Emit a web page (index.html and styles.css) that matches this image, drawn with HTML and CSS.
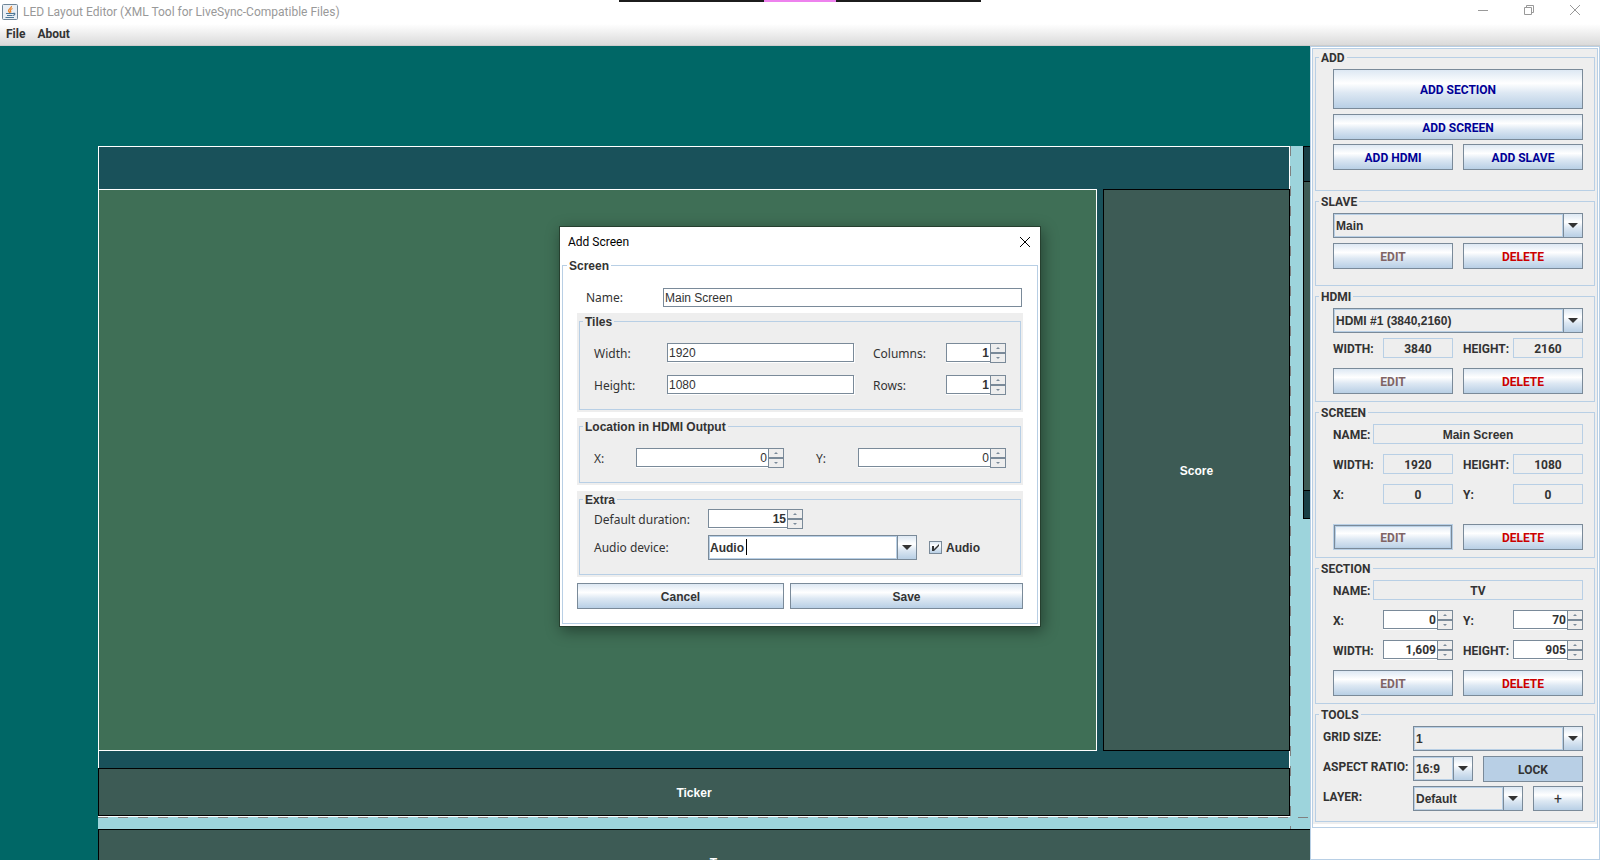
FILE: index.html
```html
<!DOCTYPE html>
<html lang="en">
<head>
<meta charset="utf-8">
<title>LED Layout Editor</title>
<link rel="stylesheet" href="styles.css">
</head>
<body>
<header class="titlebar">
  <svg class="app-icon" viewBox="0 0 16 16" aria-hidden="true">
    <rect x=".5" y=".5" width="15" height="15" rx="1" fill="#e9eff5" stroke="#6f8698"/>
    <path d="M9.500 2C10 4 6 5 6.500 7L8 9M10.500 4.500C8 5.500 8 6.500 9 8.500" fill="none" stroke="#e8862e" stroke-width="1.300"/>
    <path d="M4 9.500h7M5 11.500h5.500M3.500 13.500h8.500M11 9.500c2.500-.8 2.500 1.500 0 2" fill="none" stroke="#4d7898" stroke-width="1.200"/>
  </svg>
  <h1 class="app-title">LED Layout Editor (XML Tool for LiveSync-Compatible Files)</h1>
  <div class="window-buttons">
    <button class="window-button" aria-label="Minimize"><svg viewBox="0 0 10 10"><path d="M0 5.500h10"/></svg></button>
    <button class="window-button" aria-label="Restore"><svg viewBox="0 0 10 10"><path d="M.5 2.500h7v7h-7zM2.500 2.500v-2h7v7h-2"/></svg></button>
    <button class="window-button" aria-label="Close"><svg viewBox="0 0 10 10"><path d="M0 0l10 10M10 0L0 10"/></svg></button>
  </div>
  <div class="share-strip"><span class="share-strip-mark"></span></div>
</header>
<nav class="menubar">
  <button class="menu-item">File</button>
  <button class="menu-item">About</button>
</nav>
<main class="workspace">
  <div class="canvas">
    <div class="output"></div>
    <div class="screen screen-main"></div>
    <div class="block block-tv"></div>
    <div class="block block-score">Score</div>
    <div class="block block-ticker">Ticker</div>
    <div class="guide-h"></div>
    <div class="guide-v"></div>
    <div class="block block-lower">T</div>
    <div class="side-screen">
      <div class="block side-a"></div>
      <div class="block side-b"></div>
      <div class="block side-c"></div>
    </div>
  </div>
  <aside class="sidebar">
    <div class="sidebar-inner">
      <div class="groups">
        <fieldset class="group">
          <legend>ADD</legend>
          <div class="group-body body-add">
            <button class="btn btn-add btn-tall">ADD SECTION</button>
            <div class="stack">
              <button class="btn btn-add">ADD SCREEN</button>
              <div class="pair">
                <button class="btn btn-add">ADD HDMI</button>
                <button class="btn btn-add">ADD SLAVE</button>
              </div>
            </div>
          </div>
        </fieldset>
        <fieldset class="group">
          <legend>SLAVE</legend>
          <div class="group-body body-slave">
            <div class="combo"><select aria-label="Slave"><option>Main</option></select><span class="arrow"></span></div>
            <div class="pair">
              <button class="btn btn-edit">EDIT</button>
              <button class="btn btn-delete">DELETE</button>
            </div>
          </div>
        </fieldset>
        <fieldset class="group">
          <legend>HDMI</legend>
          <div class="group-body">
            <div class="combo"><select aria-label="HDMI"><option>HDMI #1 (3840,2160)</option></select><span class="arrow"></span></div>
            <div class="pair">
              <div class="prop"><label for="hw">WIDTH:</label><input id="hw" class="readout" value="3840" readonly></div>
              <div class="prop"><label for="hh">HEIGHT:</label><input id="hh" class="readout" value="2160" readonly></div>
            </div>
            <div class="pair spaced-row">
              <button class="btn btn-edit">EDIT</button>
              <button class="btn btn-delete">DELETE</button>
            </div>
          </div>
        </fieldset>
        <fieldset class="group">
          <legend>SCREEN</legend>
          <div class="group-body rows">
            <div class="prop prop-name"><label for="sn">NAME:</label><input id="sn" class="readout mixed" value="Main Screen" readonly></div>
            <div class="pair">
              <div class="prop"><label for="sw">WIDTH:</label><input id="sw" class="readout" value="1920" readonly></div>
              <div class="prop"><label for="sh">HEIGHT:</label><input id="sh" class="readout" value="1080" readonly></div>
            </div>
            <div class="pair">
              <div class="prop"><label for="sx">X:</label><input id="sx" class="readout" value="0" readonly></div>
              <div class="prop"><label for="sy">Y:</label><input id="sy" class="readout" value="0" readonly></div>
            </div>
            <div class="pair far-row">
              <button class="btn btn-edit btn-focus">EDIT</button>
              <button class="btn btn-delete">DELETE</button>
            </div>
          </div>
        </fieldset>
        <fieldset class="group">
          <legend>SECTION</legend>
          <div class="group-body rows">
            <div class="prop prop-name"><label for="cn">NAME:</label><input id="cn" class="readout" value="TV" readonly></div>
            <div class="pair">
              <div class="prop"><label for="cx">X:</label><div class="spinner"><input id="cx" value="0"><button class="up" aria-label="Increase"></button><button class="down" aria-label="Decrease"></button></div></div>
              <div class="prop"><label for="cy">Y:</label><div class="spinner"><input id="cy" value="70"><button class="up" aria-label="Increase"></button><button class="down" aria-label="Decrease"></button></div></div>
            </div>
            <div class="pair">
              <div class="prop"><label for="cw">WIDTH:</label><div class="spinner"><input id="cw" value="1,609"><button class="up" aria-label="Increase"></button><button class="down" aria-label="Decrease"></button></div></div>
              <div class="prop"><label for="ch">HEIGHT:</label><div class="spinner"><input id="ch" value="905"><button class="up" aria-label="Increase"></button><button class="down" aria-label="Decrease"></button></div></div>
            </div>
            <div class="pair">
              <button class="btn btn-edit">EDIT</button>
              <button class="btn btn-delete">DELETE</button>
            </div>
          </div>
        </fieldset>
        <fieldset class="group">
          <legend>TOOLS</legend>
          <div class="group-body body-tools">
            <div class="tool"><label for="grid">GRID SIZE:</label><div class="combo"><select id="grid"><option>1</option></select><span class="arrow"></span></div></div>
            <div class="tool tool-ratio"><label for="ratio">ASPECT RATIO:</label><div class="combo"><select id="ratio"><option>16:9</option></select><span class="arrow"></span></div><button class="btn btn-pressed" aria-pressed="true">LOCK</button></div>
            <div class="tool tool-layer"><label for="layer">LAYER:</label><div class="combo"><select id="layer"><option>Default</option></select><span class="arrow"></span></div><button class="btn btn-plus">+</button></div>
          </div>
        </fieldset>
      </div>
    </div>
  </aside>
</main>

<div class="dialog" role="dialog" aria-labelledby="dialog-title">
  <div class="dialog-head">
    <h2 id="dialog-title" class="dialog-title">Add Screen</h2>
    <button class="dialog-close" aria-label="Close"><svg viewBox="0 0 10 10"><path d="M0 0l10 10M10 0L0 10"/></svg></button>
  </div>
  <fieldset class="group dialog-group">
    <legend>Screen</legend>
    <form class="dialog-body">
      <div class="name-row"><label for="name">Name:</label><input id="name" class="field" value="Main Screen"></div>
      <div class="panel">
        <fieldset class="group">
          <legend>Tiles</legend>
          <div class="tiles">
            <label for="tw">Width:</label><input id="tw" class="field" value="1920">
            <label for="tc" class="second-label">Columns:</label><div class="spinner spinner-bold"><input id="tc" value="1"><button type="button" class="up" aria-label="Increase"></button><button type="button" class="down" aria-label="Decrease"></button></div>
            <label for="th">Height:</label><input id="th" class="field" value="1080">
            <label for="tr" class="second-label">Rows:</label><div class="spinner spinner-bold"><input id="tr" value="1"><button type="button" class="up" aria-label="Increase"></button><button type="button" class="down" aria-label="Decrease"></button></div>
          </div>
        </fieldset>
      </div>
      <div class="panel">
        <fieldset class="group">
          <legend>Location in HDMI Output</legend>
          <div class="location">
            <div class="axis"><label for="lx">X:</label><div class="spinner spinner-plain"><input id="lx" value="0"><button type="button" class="up" aria-label="Increase"></button><button type="button" class="down" aria-label="Decrease"></button></div></div>
            <div class="axis"><label for="ly">Y:</label><div class="spinner spinner-plain"><input id="ly" value="0"><button type="button" class="up" aria-label="Increase"></button><button type="button" class="down" aria-label="Decrease"></button></div></div>
          </div>
        </fieldset>
      </div>
      <div class="panel">
        <fieldset class="group">
          <legend>Extra</legend>
          <div class="extra">
            <div class="extra-row"><label for="dur">Default duration:</label><div class="spinner spinner-bold spinner-mid"><input id="dur" value="15"><button type="button" class="up" aria-label="Increase"></button><button type="button" class="down" aria-label="Decrease"></button></div></div>
            <div class="extra-row"><label for="dev">Audio device:</label><div class="combo combo-edit"><input id="dev" value="Audio"><span class="caret"></span><button type="button" class="arrow" aria-label="Show devices"></button></div>
              <div class="check"><span class="check-frame"><input type="checkbox" id="audio" checked><svg class="check-mark" viewBox="0 0 13 13" aria-hidden="true"><path d="M3 5h2v3l5-5v2L5 10H3z"/></svg></span><label for="audio">Audio</label></div>
            </div>
          </div>
        </fieldset>
      </div>
      <div class="dialog-actions">
        <button type="button" class="btn mixed">Cancel</button>
        <button type="button" class="btn mixed">Save</button>
      </div>
    </form>
  </fieldset>
</div>
</body>
</html>
```
FILE: styles.css
```css
:root {
  --line: #b8cfe5;
  --edge: #7a8a99;
  --panel: #eeeeee;
  --ink: #333333;
  --grad: linear-gradient(#dde8f3 0%, #ffffff 35%, #dde8f3 60%, #b8cfe5 100%);
  --caps: Roboto, sans-serif;
  --text: "Liberation Sans", Arial, sans-serif;
  --humanist: "Noto Sans", sans-serif;
}

* { box-sizing: border-box; }

body {
  margin: 0;
  min-height: 100vh;
  display: flex;
  flex-direction: column;
  position: relative;
  overflow: hidden;
  background: #fff;
  color: var(--ink);
  font: bold 12px/15px var(--text);
}

button, input, select {
  font: inherit;
  color: inherit;
  margin: 0;
  padding: 0;
  border: 0;
  border-radius: 0;
  outline: 0;
  min-width: 0;
  background: none;
}

/* Title bar and menu */
.titlebar {
  height: 24px;
  display: flex;
  align-items: center;
  padding: 0 2px;
  position: relative;
}
.app-icon { width: 16px; height: 16px; }
.app-title {
  margin: 0 0 0 5px;
  font: normal 12px/16px Roboto, sans-serif;
  color: #999;
}
.window-buttons { margin-left: auto; display: flex; align-self: flex-start; }
.window-button { width: 46px; height: 20px; display: grid; place-items: center; }
.window-button svg, .dialog-close svg { width: 10px; height: 10px; fill: none; stroke: #999; overflow: visible; }
.share-strip {
  position: absolute;
  top: 0;
  left: 619px;
  width: 362px;
  height: 2px;
  background: #1c1c1c;
}
.share-strip-mark { display: block; width: 72px; height: 2px; margin: 0 auto; background: #ee82ee; }
.menubar {
  height: 22px;
  display: flex;
  gap: 12px;
  padding: 0 6px 1px;
  background: linear-gradient(#ffffff, #dadada);
  border-bottom: 1px solid #cccccc;
  font-family: var(--caps);
}

/* Layout canvas */
.workspace { flex: 1; display: flex; }
.canvas {
  flex: 1;
  position: relative;
  overflow: hidden;
  background: #006766;
  color: #fff;
}
.canvas > div, .side-screen > div { position: absolute; }
.output { left: 98px; top: 100px; right: 0; bottom: 0; background: #9dd4dc; }
.screen-main { left: 98px; top: 100px; width: 1192px; height: 671px; background: #19515a; border: 1px solid #fff; }
.block {
  display: grid;
  place-items: center;
  padding-top: 2px;
  background: #3d5b55;
  border: 1px solid #000;
}
.block-tv { left: 98px; top: 143px; width: 999px; height: 562px; background: #3f6f56; border-color: #fff; }
.block-score { left: 1103px; top: 143px; width: 187px; height: 562px; }
.block-ticker { left: 98px; top: 722px; width: 1192px; height: 48px; }
.block-lower { left: 98px; top: 783px; width: 1231px; height: 66px; }
.guide-h {
  left: 98px;
  right: 0;
  top: 771px;
  height: 1px;
  background: repeating-linear-gradient(90deg, #808080 0 10px, transparent 10px 20px);
}
.guide-v {
  left: 1290px;
  top: 100px;
  bottom: 0;
  width: 1px;
  background: repeating-linear-gradient(#808080 0 10px, transparent 10px 20px);
}
.side-screen { left: 1303px; top: 100px; width: 40px; height: 373px; }
.side-a { inset: 0 0 auto; height: 36px; background: #193e45; }
.side-b { inset: 35px 0 auto; height: 310px; }
.side-c { inset: 344px 0 auto; height: 29px; background: #193e45; }

/* Titled groups */
.group {
  margin: 0;
  padding: 0;
  min-width: 0;
  border: 1px solid var(--line);
}
.group legend { margin-left: 3px; padding: 0 2px; height: 15px; line-height: 17px; }

/* Sidebar */
.sidebar {
  width: 290px;
  padding: 1px;
  border: 1px solid var(--line);
  font-family: var(--caps);
}
.sidebar-inner { padding-bottom: 3px; border: 1px solid var(--line); }
.groups {
  display: grid;
  gap: 3px;
  padding: 1px 2px 2px;
  background: var(--panel);
}
.group-body { display: grid; gap: 5px; padding: 4px 11px 7px 17px; }
.body-add { padding-bottom: 20px; }
.body-slave { padding-bottom: 16px; }
.rows { gap: 10px; }
.stack { display: grid; gap: 4px; }
.pair { display: grid; grid-template-columns: 1fr 1fr; gap: 10px; }
.spaced-row { margin-top: 5px; }
.far-row { margin-top: 10px; }
.prop { display: grid; grid-template-columns: 50px 1fr; align-items: center; }
.prop label { line-height: 16px; padding-top: 1px; }
.prop-name { grid-template-columns: 40px 1fr; }
.readout {
  width: 100%;
  height: 20px;
  padding-top: 1px;
  border: 1px solid var(--line);
  text-align: center;
}
.mixed, .combo { font-family: var(--text); }
.body-tools { padding: 4px 11px 10px 7px; }
.tool { display: grid; grid-template-columns: 90px 1fr; height: 25px; }
.tool label { padding-top: 4px; white-space: nowrap; }
.tool-ratio { grid-template-columns: 90px 60px 1fr; }
.tool-ratio .btn { margin-left: 10px; }
.tool-layer { grid-template-columns: 90px 110px 1fr; }
.tool-layer .btn { margin-left: 10px; height: 25px; }

/* Controls */
.btn {
  height: 26px;
  padding-top: 2px;
  border: 1px solid var(--edge);
  background: var(--grad);
  text-align: center;
}
.btn-tall { height: 40px; }
.btn-add { color: #000096; }
.btn-edit { color: #806464; }
.btn-delete { color: #cc0000; }
.btn-pressed { background: var(--line); }
.btn-plus { font-weight: normal; font-size: 14px; }
.btn-focus { border-color: var(--line); box-shadow: inset 0 0 0 1px var(--edge), inset 0 0 0 2px var(--line); }

.combo {
  display: grid;
  grid-template-columns: 1fr 19px;
  height: 25px;
  border: 1px solid var(--edge);
  position: relative;
}
.combo select, .combo input {
  appearance: none;
  width: 100%;
  height: 23px;
  padding: 1px 0 0 1px;
  border: 1px solid var(--line);
}
.arrow {
  display: grid;
  place-items: center;
  border-left: 1px solid var(--edge);
  background: var(--grad);
}
.arrow::before {
  content: "";
  border: 5px solid transparent;
  border-top-color: var(--ink);
  border-bottom: 0;
}
.combo-edit { width: 209px; }
.combo-edit input { padding-left: 0; background: #fff; }
.caret { position: absolute; left: 37px; top: 3px; width: 1px; height: 16px; background: #000; }

.field {
  width: 100%;
  height: 19px;
  padding: 1px 0 0 1px;
  border: 1px solid var(--edge);
  background: #fff;
  box-shadow: 1px 1px 0 #fff;
  font: normal 12px/15px var(--text);
}

.spinner {
  display: grid;
  grid-template: 10px 10px / 1fr 16px;
  height: 20px;
}
.spinner input {
  grid-row: 1 / 3;
  width: 100%;
  height: 19px;
  padding: 1px 1px 0 0;
  border: 1px solid var(--edge);
  border-right: 0;
  background: #fff;
  box-shadow: 0 1px 0 #fff;
  text-align: right;
}
.spinner button {
  display: grid;
  place-items: center;
  border: 1px solid var(--edge);
  background: var(--panel);
}
.spinner button::before { content: ""; border: 2px solid transparent; }
.spinner .up::before { border-bottom-color: var(--edge); border-top: 0; }
.spinner .down::before { border-top-color: var(--edge); border-bottom: 0; }
.spinner-plain input { font: normal 12px/15px var(--text); }
.spinner-bold input { font: bold 12px/15px var(--text); }
.spinner-mid { width: 95px; }

/* Add Screen dialog */
.dialog {
  position: absolute;
  left: 559px;
  top: 226px;
  width: 482px;
  padding: 0 2px 2px;
  border: 1px solid #26402f;
  background: #fff;
  box-shadow: 2px 4px 14px rgba(0, 0, 0, .4);
}
.dialog-head {
  height: 31px;
  display: flex;
  align-items: center;
  justify-content: space-between;
  padding: 0 8px 2px 6px;
}
.dialog-title { margin: 0; font: normal 12px/16px Roboto, sans-serif; color: #000; }
.dialog-close { width: 10px; height: 10px; }
.dialog-close svg { display: block; stroke: #000; }
.dialog-group > legend { margin-left: 4px; }
.dialog-body { display: grid; gap: 6px; padding: 14px; }
.dialog-body label { font: normal 12px/15px var(--humanist); }
.name-row { display: grid; grid-template-columns: 77px 1fr; align-items: center; height: 20px; padding: 0 1px 0 9px; }
.panel { padding: 1px 2px 2px; background: var(--panel); }
.tiles {
  display: grid;
  grid-template-columns: 73px 1fr 92px 60px;
  row-gap: 12px;
  align-items: center;
  padding: 14px 14px 14px 14px;
}
.tiles .field { align-self: start; }
.second-label { padding-left: 19px; }
.location { display: grid; grid-template-columns: 1fr 1fr; gap: 32px; padding: 14px; }
.axis { display: grid; grid-template-columns: 42px 1fr; align-items: center; }
.extra { display: grid; gap: 6px; padding: 2px 14px 14px; }
.extra-row { display: flex; align-items: center; }
.extra-row > label { width: 114px; }
.check { display: flex; align-items: center; gap: 4px; margin-left: 12px; }
.dialog-body .check label { padding-top: 1px; font: bold 12px/15px var(--text); }
.check-frame { position: relative; width: 13px; height: 13px; }
.check-frame input {
  appearance: none;
  display: block;
  width: 13px;
  height: 13px;
  border: 1px solid var(--edge);
  background: var(--grad);
}
.check-mark { position: absolute; inset: 0; fill: var(--ink); pointer-events: none; }
.dialog-actions { display: grid; grid-template-columns: 207fr 233fr; gap: 6px; }
```
